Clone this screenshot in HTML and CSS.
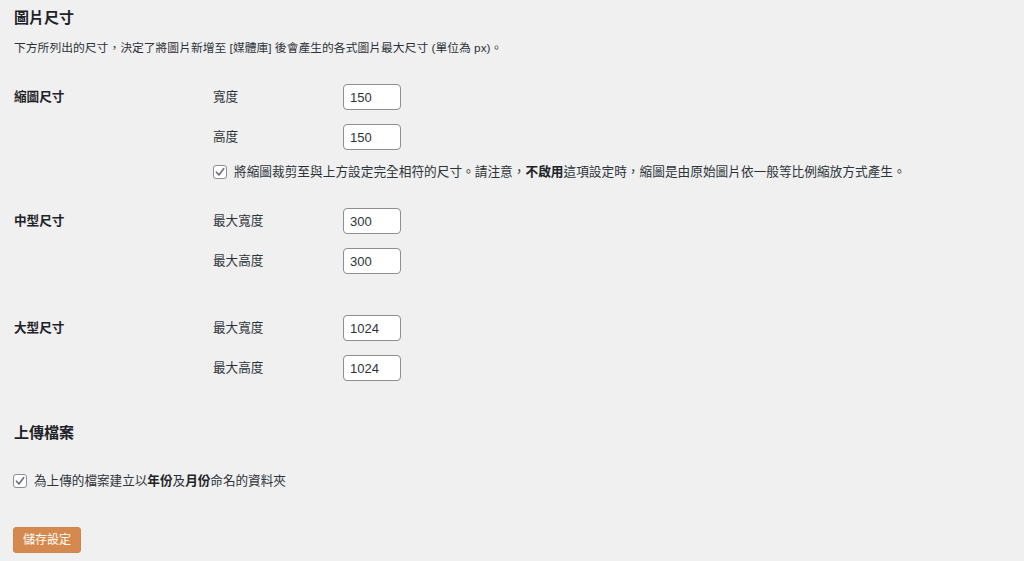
FILE: index.html
```html
<!DOCTYPE html>
<html lang="zh-Hant">
<head>
<meta charset="utf-8">
<title>媒體設定</title>
<link rel="stylesheet" href="styles.css">
</head>
<body>
<div class="wrap">
  <h2 class="title title-first">圖片尺寸</h2>
  <p class="desc">下方所列出的尺寸，決定了將圖片新增至 [媒體庫] 後會產生的各式圖片最大尺寸 (單位為 px)。</p>

  <div class="row row-thumb">
    <div class="row-label">縮圖尺寸</div>
    <div class="row-fields">
      <div class="field"><span class="field-label">寬度</span><input class="num" type="text" value="150"></div>
      <div class="field"><span class="field-label">高度</span><input class="num" type="text" value="150"></div>
      <div class="check-line check-crop">
        <span class="checkbox"><svg viewBox="0 0 14 14" width="14" height="14"><path d="M3.4 7.2 L6 9.9 L10.8 3.6" fill="none" stroke="#6b6f74" stroke-width="1.6" stroke-linecap="round" stroke-linejoin="round"/></svg></span>
        <span class="check-text">將縮圖裁剪至與上方設定完全相符的尺寸。請注意，<b>不啟用</b>這項設定時，縮圖是由原始圖片依一般等比例縮放方式產生。</span>
      </div>
    </div>
  </div>

  <div class="row row-medium">
    <div class="row-label">中型尺寸</div>
    <div class="row-fields">
      <div class="field"><span class="field-label">最大寬度</span><input class="num" type="text" value="300"></div>
      <div class="field"><span class="field-label">最大高度</span><input class="num" type="text" value="300"></div>
    </div>
  </div>

  <div class="row row-large">
    <div class="row-label">大型尺寸</div>
    <div class="row-fields">
      <div class="field"><span class="field-label">最大寬度</span><input class="num" type="text" value="1024"></div>
      <div class="field"><span class="field-label">最大高度</span><input class="num" type="text" value="1024"></div>
    </div>
  </div>

  <h2 class="title title-upload">上傳檔案</h2>

  <div class="check-line check-upload">
    <span class="checkbox"><svg viewBox="0 0 14 14" width="14" height="14"><path d="M3.4 7.2 L6 9.9 L10.8 3.6" fill="none" stroke="#6b6f74" stroke-width="1.6" stroke-linecap="round" stroke-linejoin="round"/></svg></span>
    <span class="check-text">為上傳的檔案建立以<b>年份</b>及<b>月份</b>命名的資料夾</span>
  </div>

  <button class="save" type="button">儲存設定</button>
</div>
</body>
</html>
```

FILE: styles.css
```css
html, body {
  margin: 0;
  padding: 0;
  background: #f0f0f1;
}

body {
  font-family: "Liberation Sans", "Noto Sans CJK TC", sans-serif;
  font-size: 12.6px;
  color: #1d2327;
}

.wrap {
  padding: 0 14px;
  display: flex;
  flex-direction: column;
  align-items: flex-start;
}

.title {
  font-size: 15px;
  font-weight: 700;
  line-height: 20px;
  margin: 0;
  color: #1d2327;
}

.title-first {
  margin-top: 8px;
}

.desc {
  margin: 11px 0 0;
  line-height: 18px;
  font-size: 11.8px;
  color: #2c3338;
}

.row {
  display: grid;
  grid-template-columns: 199px auto;
  align-items: start;
}

.row-thumb { margin-top: 27px; }
.row-medium { margin-top: 29px; }
.row-large { margin-top: 41px; }

.row-label {
  font-weight: 700;
  line-height: 27px;
  font-size: 12.6px;
}

.row-fields {
  display: flex;
  flex-direction: column;
  gap: 14px;
}

.field {
  display: flex;
  align-items: center;
  height: 26px;
}

.field-label {
  width: 130px;
  line-height: 26px;
  color: #2c3338;
}

.num {
  box-sizing: border-box;
  width: 58px;
  height: 26px;
  margin: 0;
  padding: 0 6px;
  border: 1px solid #8c8f94;
  border-radius: 4px;
  background: #fff;
  font-family: "Liberation Sans", sans-serif;
  font-size: 13px;
  color: #2c3338;
  outline: none;
}

.check-line {
  display: flex;
  align-items: center;
  gap: 7px;
  height: 14px;
}

.check-crop { margin-top: 1px; }

.checkbox {
  box-sizing: border-box;
  width: 14px;
  height: 14px;
  border: 1px solid #8c8f94;
  border-radius: 3px;
  background: #fff;
  display: flex;
  align-items: center;
  justify-content: center;
  flex: none;
}

.checkbox svg {
  display: block;
  margin: -1px;
}

.check-text {
  line-height: 18px;
  color: #2c3338;
}

.check-crop .check-text {
  font-size: 12.68px;
}

.check-text b {
  color: #1d2327;
}

.title-upload {
  margin-top: 42px;
}

.check-upload {
  margin-top: 31px;
  margin-left: -1px;
}

.save {
  margin: 39px 0 0 -1px;
  box-sizing: border-box;
  width: 68px;
  height: 26px;
  padding: 0;
  border: 1px solid #d1844a;
  border-radius: 3px;
  background: #d6894e;
  color: #fff;
  font-family: "Liberation Sans", "Noto Sans CJK TC", sans-serif;
  font-size: 12px;
  line-height: 24px;
  cursor: pointer;
}
```
